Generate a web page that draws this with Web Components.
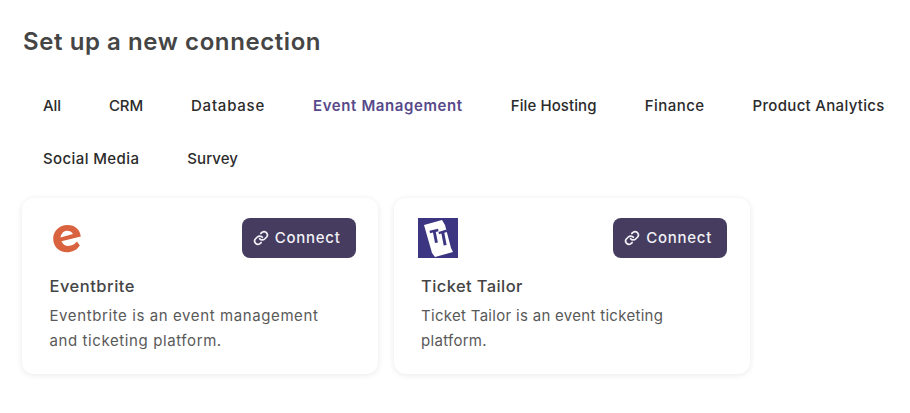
<!DOCTYPE html>
<html lang="en"><head><meta charset="utf-8"><title>Set up a new connection</title>
<style>
html,body{margin:0;background:#fff}
body{font-family:Inter,"Liberation Sans",sans-serif;width:910px;height:413px;overflow:hidden}
</style></head><body>
<connection-page>
  <filter-tab>All</filter-tab><filter-tab>CRM</filter-tab><filter-tab style="--ls:.77px">Database</filter-tab><filter-tab active style="--ls:.6px">Event Management</filter-tab><filter-tab style="--ls:.1px">File Hosting</filter-tab><filter-tab style="--ls:.47px">Finance</filter-tab><filter-tab style="--ls:.31px">Product Analytics</filter-tab><filter-tab style="--ls:.4px">Social Media</filter-tab><filter-tab style="--ls:.07px">Survey</filter-tab>
  <connection-card slot="cards" style="--ls:.6px;--nls:.5px" name="Eventbrite" desc="Eventbrite is an event management and ticketing platform.">
    <svg slot="logo" width="40" height="40" viewBox="0 0 40 40"><path fill="#d9623f" fill-rule="evenodd" d="M21.500 7C29 7 34 11.500 34.800 18.500L15.500 23.200C16.800 26.800 20 28.300 23.500 27.800C27 27.300 29.500 25.300 31 23.500L33.800 27.500C31 32 26 34.300 21 34.300C13 34.300 7.200 28.500 7.200 20.500C7.200 13 13.500 7 21.500 7ZM14.500 19.500L27 16C25.500 13.500 23 12.500 20.500 12.800C17.300 13.200 15 16 14.500 19.500Z"/></svg>
  </connection-card>
  <connection-card slot="cards" style="--ls:.3px;--nls:.4px" name="Ticket Tailor" desc="Ticket Tailor is an event ticketing platform.">
    <svg slot="logo" width="40" height="40" viewBox="0 0 40 40"><rect width="40" height="40" fill="#3c3682"/><path fill="#fff" d="M6 7L24 2L27 7L33 30L35 34L17 39L14 35Z"/><path fill="#3c3682" d="M11.500 12.800L20 10.800L20.600 13.300L17.800 14L19.900 24.400L17 25L15 14.500L12 15.200ZM20.500 14L28.500 11.500L29.100 14L26.300 14.800L28.600 26.900L25.700 27.600L23.400 15.400L21 16.200Z"/></svg>
  </connection-card>
</connection-page>
<script>
class ConnectionPage extends HTMLElement{constructor(){super();this.attachShadow({mode:'open'}).innerHTML=`<style>
:host{display:block;padding:25px 0 0 19px;box-sizing:border-box}
h1{margin:0 0 0 4px;font:600 24px/34px Inter,sans-serif;color:#454545;letter-spacing:.58px}
.tabs{display:flex;flex-wrap:wrap;margin-top:20px;row-gap:0}
.cards{display:flex;gap:15.500px;margin:13px 0 0 3px}
</style><h1>Set up a new connection</h1><div class="tabs"><slot></slot></div><div class="cards"><slot name="cards"></slot></div>`}}
class FilterTab extends HTMLElement{constructor(){super();this.attachShadow({mode:'open'}).innerHTML=`<style>
:host{display:block;padding:0 24px;font:500 15px/53px Inter,sans-serif;color:#2b2b2b;letter-spacing:var(--ls,-.1px);white-space:nowrap}
:host([active]){color:#57498a;font-weight:600}
</style><slot></slot>`}}
class ConnectionCard extends HTMLElement{constructor(){super();const n=this.getAttribute('name'),d=this.getAttribute('desc');this.attachShadow({mode:'open'}).innerHTML=`<style>
:host{display:block;width:356px;height:176px;box-sizing:border-box;padding:20px 22.300px 0 27.500px;background:#fff;border-radius:12px;box-shadow:0 1px 6px rgba(0,0,0,.09)}
.top{display:flex;justify-content:space-between;align-items:center;height:40px;margin-left:-3.500px}
::slotted(svg){display:block}
button{display:flex;align-items:center;gap:6px;width:114px;height:40px;box-sizing:border-box;padding:0 0 0 11px;border:0;border-radius:8px;background:#453c60;color:#f2f1f5;font:500 15px/22px Inter,sans-serif;letter-spacing:.75px}
h2{margin:17px 0 0;font:500 16.500px/22px Inter,sans-serif;color:#454545;letter-spacing:var(--nls)}
p{margin:6px 0 0;font:400 15px/25px Inter,sans-serif;color:#595959;letter-spacing:var(--ls);width:280px}
</style><div class="top"><slot name="logo"></slot><button><svg width="16" height="16" viewBox="0 0 24 24" fill="none" stroke="#f2f1f5" stroke-width="2.600" stroke-linecap="round" stroke-linejoin="round"><path d="M10 13a5 5 0 0 0 7.500.5l3-3a5 5 0 0 0-7-7l-1.700 1.700"/><path d="M14 11a5 5 0 0 0-7.500-.5l-3 3a5 5 0 0 0 7 7l1.700-1.700"/></svg>Connect</button></div><h2>${n}</h2><p>${d}</p>`}}
customElements.define('connection-page',ConnectionPage);customElements.define('filter-tab',FilterTab);customElements.define('connection-card',ConnectionCard);
</script></body></html>
